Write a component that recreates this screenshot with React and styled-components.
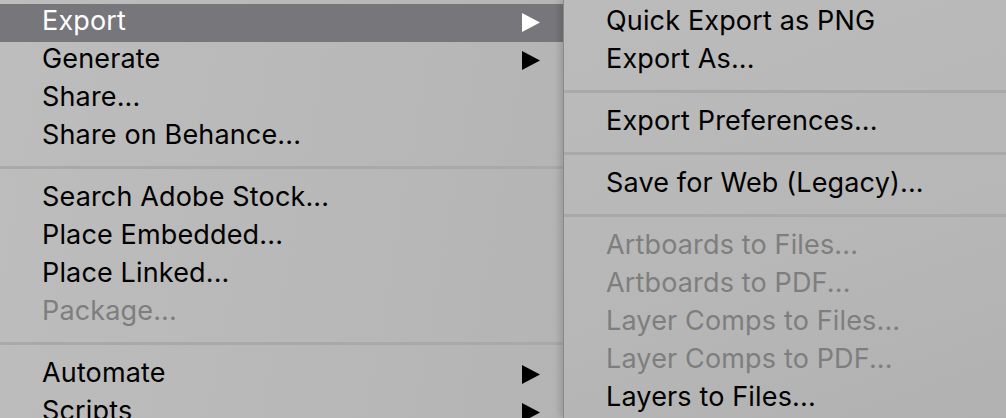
import React from "react";
import styled, { createGlobalStyle } from "styled-components";

const Global = createGlobalStyle`
  html, body { margin: 0; padding: 0; background: #b8b8b8; }
  body { font-family: Inter, "Liberation Sans", Arial, sans-serif; }
`;

const Page = styled.div`
  display: flex;
  width: 1006px;
  height: 418px;
  overflow: hidden;
`;

const Menu = styled.div`
  display: flex;
  flex-direction: column;
  padding-top: 4px;
  box-sizing: border-box;
`;

const MainMenu = styled(Menu)`
  width: 563px;
  flex: none;
  background: linear-gradient(100deg, #bdbdbd 0%, #b8b8b8 60%, #b4b4b4 100%);
`;

const SubMenu = styled(Menu)`
  flex: 1;
  position: relative;
  z-index: 1;
  border-left: 1px solid #8a8a8a;
  background: linear-gradient(160deg, #bbbbbb 0%, #b7b7b7 60%, #b1b1b1 100%);
  box-shadow: -3px 0 7px rgba(0, 0, 0, 0.16);
`;

const Row = styled.div`
  display: flex;
  align-items: flex-start;
  flex: none;
  height: 38px;
  box-sizing: border-box;
  padding: 0 23px 0 ${(p) => p.$indent}px;
  background: ${(p) => (p.$active ? "#77767b" : "transparent")};
  color: ${(p) => (p.$active ? "#ffffff" : p.$disabled ? "#7e7e7e" : "#000000")};
`;

const Label = styled.span`
  flex: 1;
  font-size: 27px;
  line-height: 34px;
  white-space: nowrap;
  letter-spacing: 0.15px;
`;

const Arrow = styled.svg`
  flex: none;
  width: 18px;
  height: 19px;
  margin-top: 9px;
`;

const Separator = styled.div`
  flex: none;
  height: 24px;
  padding-top: 10px;
  box-sizing: border-box;
  &::before {
    content: "";
    display: block;
    height: 3px;
    background: #a9a9a9;
  }
`;

const SubArrow = ({ color }) => (
  <Arrow viewBox="0 0 18 19">
    <polygon points="0,0 18,9.5 0,19" fill={color} />
  </Arrow>
);

const Item = ({ label, active, disabled, sub, indent }) => (
  <Row $active={active} $disabled={disabled} $indent={indent}>
    <Label>{label}</Label>
    {sub && <SubArrow color={active ? "#ffffff" : "#000000"} />}
  </Row>
);

const mainItems = [
  { label: "Export", active: true, sub: true },
  { label: "Generate", sub: true },
  { label: "Share..." },
  { label: "Share on Behance..." },
  "sep",
  { label: "Search Adobe Stock..." },
  { label: "Place Embedded..." },
  { label: "Place Linked..." },
  { label: "Package...", disabled: true },
  "sep",
  { label: "Automate", sub: true },
  { label: "Scripts", sub: true },
];

const subItems = [
  { label: "Quick Export as PNG" },
  { label: "Export As..." },
  "sep",
  { label: "Export Preferences..." },
  "sep",
  { label: "Save for Web (Legacy)..." },
  "sep",
  { label: "Artboards to Files...", disabled: true },
  { label: "Artboards to PDF...", disabled: true },
  { label: "Layer Comps to Files...", disabled: true },
  { label: "Layer Comps to PDF...", disabled: true },
  { label: "Layers to Files..." },
];

const renderItems = (items, indent) =>
  items.map((it, i) =>
    it === "sep" ? <Separator key={i} /> : <Item key={i} indent={indent} {...it} />
  );

export default function App() {
  return (
    <>
      <Global />
      <Page>
        <MainMenu>{renderItems(mainItems, 42)}</MainMenu>
        <SubMenu>{renderItems(subItems, 42)}</SubMenu>
      </Page>
    </>
  );
}
